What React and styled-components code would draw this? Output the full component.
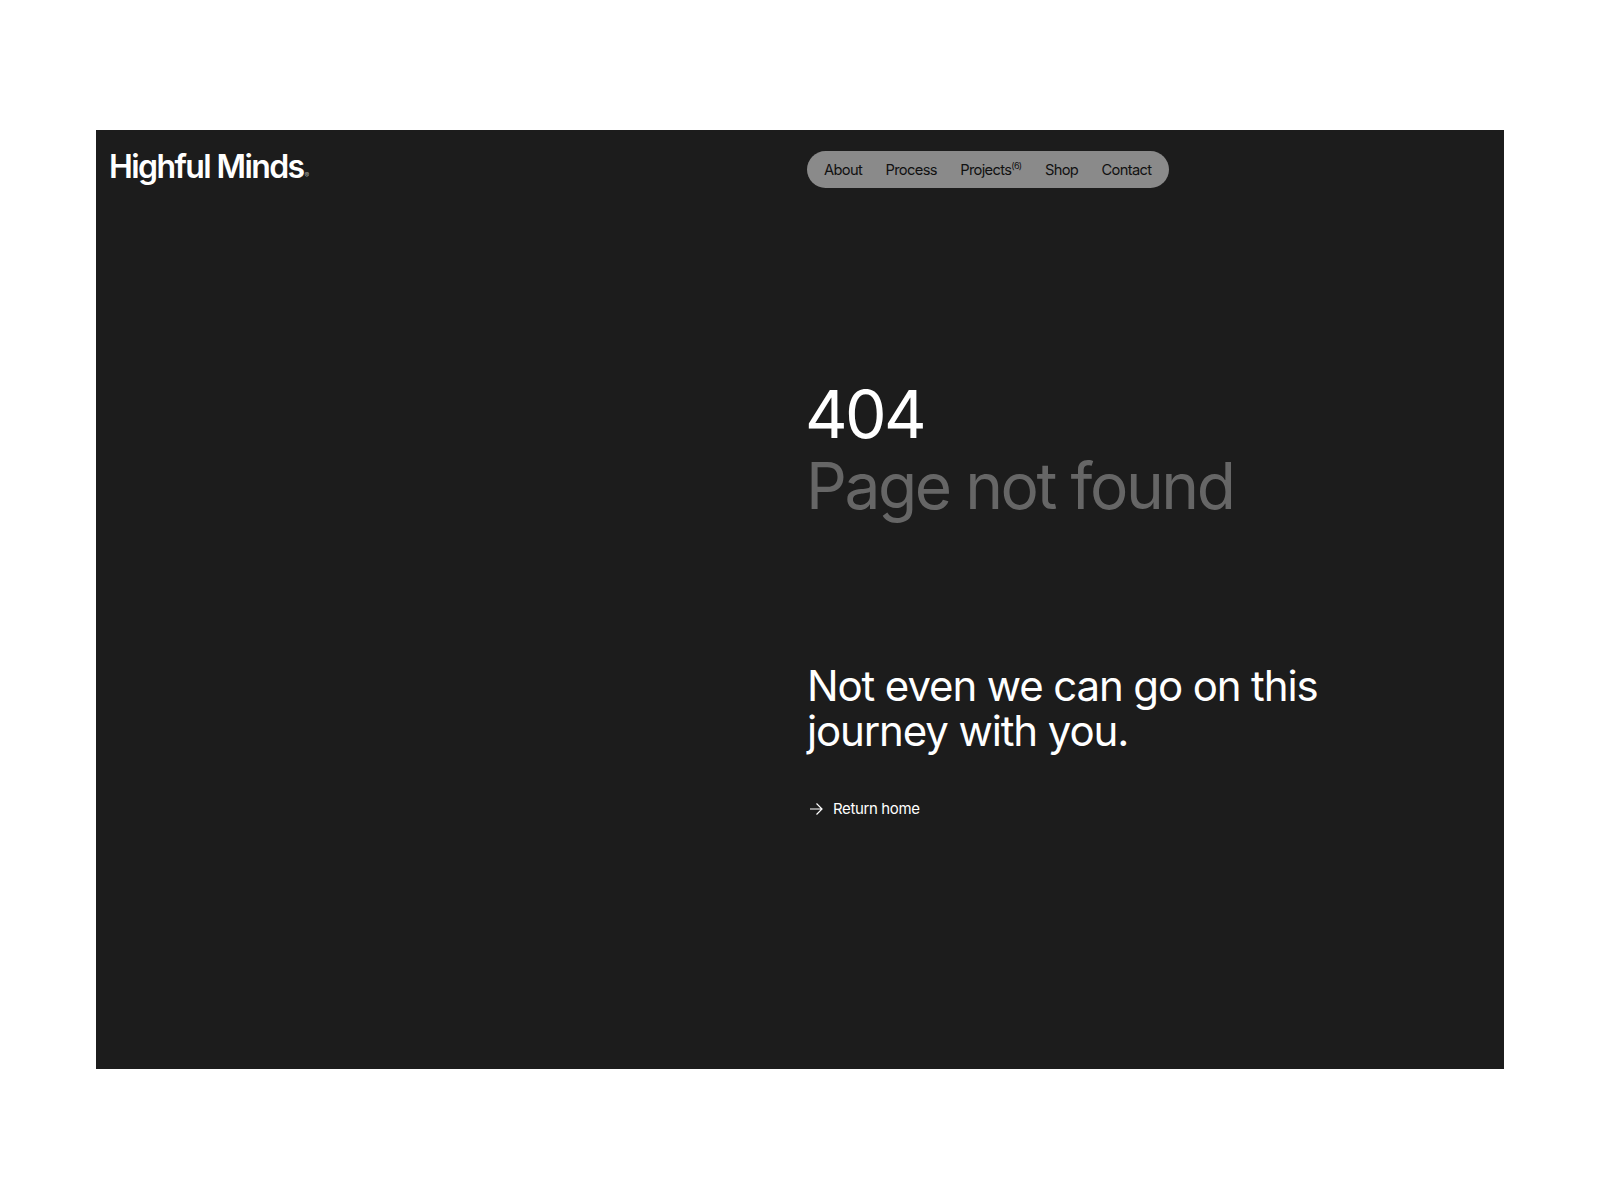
import React from "react";
import styled, { createGlobalStyle } from "styled-components";

const Global = createGlobalStyle`
  html, body { margin: 0; padding: 0; background: #fff; }
  body { font-family: Inter, "Liberation Sans", sans-serif; }
`;
const Page = styled.div`
  padding: 130px 96px 131px;
  height: 1200px;
  box-sizing: border-box;
`;
const Panel = styled.main`
  height: 939px;
  background: #1c1c1c;
  color: #fff;
  display: grid;
  grid-template-columns: 698px 1fr;
  padding: 21px 13px 0;
  box-sizing: border-box;
`;
const Logo = styled.a`
  font-size: 32px;
  line-height: 32px;
  font-weight: 600;
  letter-spacing: -0.05em;
  align-self: start;
`;
const Reg = styled.span`
  font-size: 7px;
  letter-spacing: 0;
  font-weight: 400;
  color: #aaa;
  margin-left: 1px;
`;
const Right = styled.div`
  display: flex;
  flex-direction: column;
  align-items: flex-start;
`;
const Nav = styled.nav`
  display: flex;
  gap: 23.4px;
  height: 37px;
  align-items: center;
  padding: 0 18px 0 17px;
  border-radius: 19px;
  background: #8a8a8a;
  color: #111;
  font-size: 14.7px;
  letter-spacing: -0.045em;
`;
const Sup = styled.sup`
  font-size: 9px;
  line-height: 0;
  vertical-align: 6px;
`;
const Code = styled.h1`
  margin: 190px 0 0 -2px;
  font-size: 66px;
  line-height: 72px;
  font-weight: 400;
  letter-spacing: -0.04em;
`;
const Sub = styled.h2`
  margin: 0 0 0 -1px;
  font-size: 64px;
  line-height: 72px;
  font-weight: 400;
  letter-spacing: -0.038em;
  color: #666;
`;
const Lead = styled.p`
  margin: 141px 0 0;
  font-size: 42px;
  line-height: 45px;
  font-weight: 400;
  letter-spacing: -0.027em;
  width: 560px;
`;
const Back = styled.a`
  margin-top: 46px;
  display: flex;
  align-items: center;
  gap: 10px;
  font-size: 15px;
  line-height: 20px;
  letter-spacing: -0.025em;
  padding-left: 2px;
`;

export default function App() {
  return (
    <>
      <Global />
      <Page>
        <Panel>
          <Logo>Highful Minds<Reg>®</Reg></Logo>
          <Right>
            <Nav>
              <span>About</span>
              <span>Process</span>
              <span>Projects<Sup>(6)</Sup></span>
              <span>Shop</span>
              <span>Contact</span>
            </Nav>
            <Code>404</Code>
            <Sub>Page not found</Sub>
            <Lead>Not even we can go on this journey with you.</Lead>
            <Back>
              <svg width="14" height="14" viewBox="0 0 14 14" fill="none" stroke="#fff" strokeWidth="1.2">
                <path d="M1 7h12M7.5 1.5 13 7l-5.5 5.5" />
              </svg>
              Return home
            </Back>
          </Right>
        </Panel>
      </Page>
    </>
  );
}
